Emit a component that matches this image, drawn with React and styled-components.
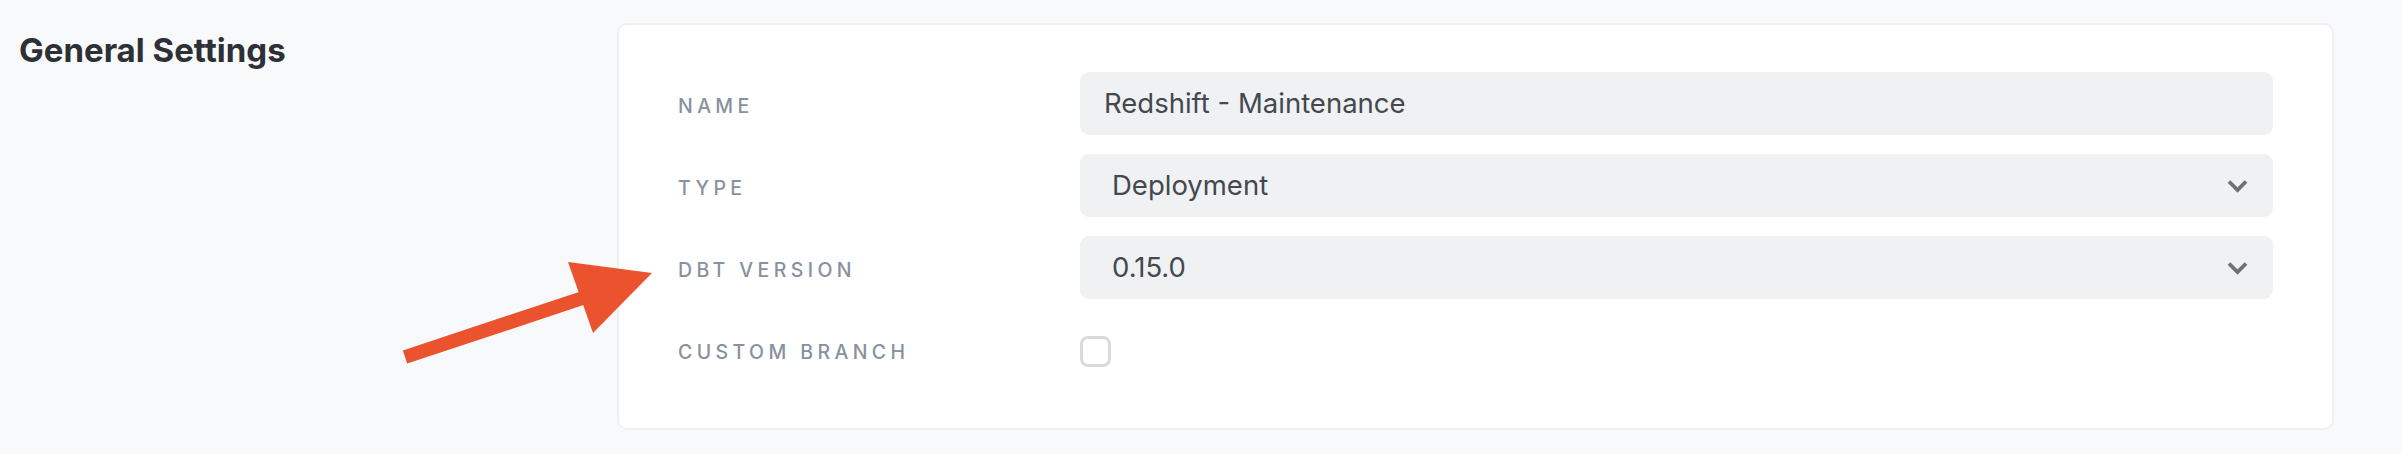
import React from "react";
import styled, { createGlobalStyle } from "styled-components";

const Global = createGlobalStyle`
  html, body { margin: 0; padding: 0; background: #f8f9fb; }
  body { font-family: Inter, "Noto Sans", sans-serif; -webkit-font-smoothing: antialiased; }
`;

const Page = styled.div`
  position: relative;
  display: flex;
  align-items: flex-start;
  padding: 23px 68px 24px 19px;
  min-height: 454px;
  box-sizing: border-box;
`;

const Side = styled.div`
  width: 598px;
  flex: none;
`;

const Heading = styled.h2`
  margin: 7px 0 0 0;
  font-size: 33px;
  line-height: 40px;
  font-weight: 700;
  color: #2d3035;
  letter-spacing: 0;
`;

const Card = styled.div`
  flex: 1;
  background: #fff;
  border: 2px solid #eef0f2;
  border-radius: 10px;
  padding: 47px 59px;
  display: grid;
  grid-template-columns: 402px 1fr;
  grid-auto-rows: 63px;
  row-gap: 19px;
  align-items: center;
`;

const Label = styled.label`
  font-size: 19.5px;
  letter-spacing: 4.4px;
  text-transform: uppercase;
  color: #87929e;
  font-weight: 500;
  padding-top: 5px;
`;

const Field = styled.div`
  height: 63px;
  box-sizing: border-box;
  background: #f0f1f3;
  border-radius: 9px;
  display: flex;
  align-items: center;
  justify-content: space-between;
  padding: 0 25px 0 ${(p) => (p.$select ? "32px" : "24px")};
  font-size: 27.5px;
  color: #43494f;
`;

const Value = styled.span`
  line-height: 1;
`;

const Check = styled.div`
  width: 31px;
  height: 31px;
  box-sizing: border-box;
  border: 3px solid #d9dadc;
  border-radius: 8px;
  background: #fff;
  margin-top: 4px;
`;

const Arrow = styled.svg`
  position: absolute;
  left: 0;
  top: 0;
  pointer-events: none;
`;

const Chevron = () => (
  <svg width="21" height="14" viewBox="0 0 21 14">
    <polyline
      points="2,2.5 10.5,11 19,2.5"
      fill="none"
      stroke="#707173"
      strokeWidth="3.8"
    />
  </svg>
);

export default function App() {
  return (
    <>
      <Global />
      <Page>
        <Side>
          <Heading>General Settings</Heading>
        </Side>
        <Card>
          <Label>Name</Label>
          <Field>
            <Value>Redshift - Maintenance</Value>
          </Field>
          <Label>Type</Label>
          <Field $select>
            <Value>Deployment</Value>
            <Chevron />
          </Field>
          <Label>dbt Version</Label>
          <Field $select>
            <Value>0.15.0</Value>
            <Chevron />
          </Field>
          <Label>Custom Branch</Label>
          <div>
            <Check />
          </div>
        </Card>
        <Arrow width="2402" height="454" viewBox="0 0 2402 454">
          <polygon
            points="402.8,350.4 580.5,291.4 584.9,304.6 407.2,363.6"
            fill="#ea532d"
          />
          <polygon points="568,262 652,273 593,333" fill="#ea532d" />
        </Arrow>
      </Page>
    </>
  );
}
